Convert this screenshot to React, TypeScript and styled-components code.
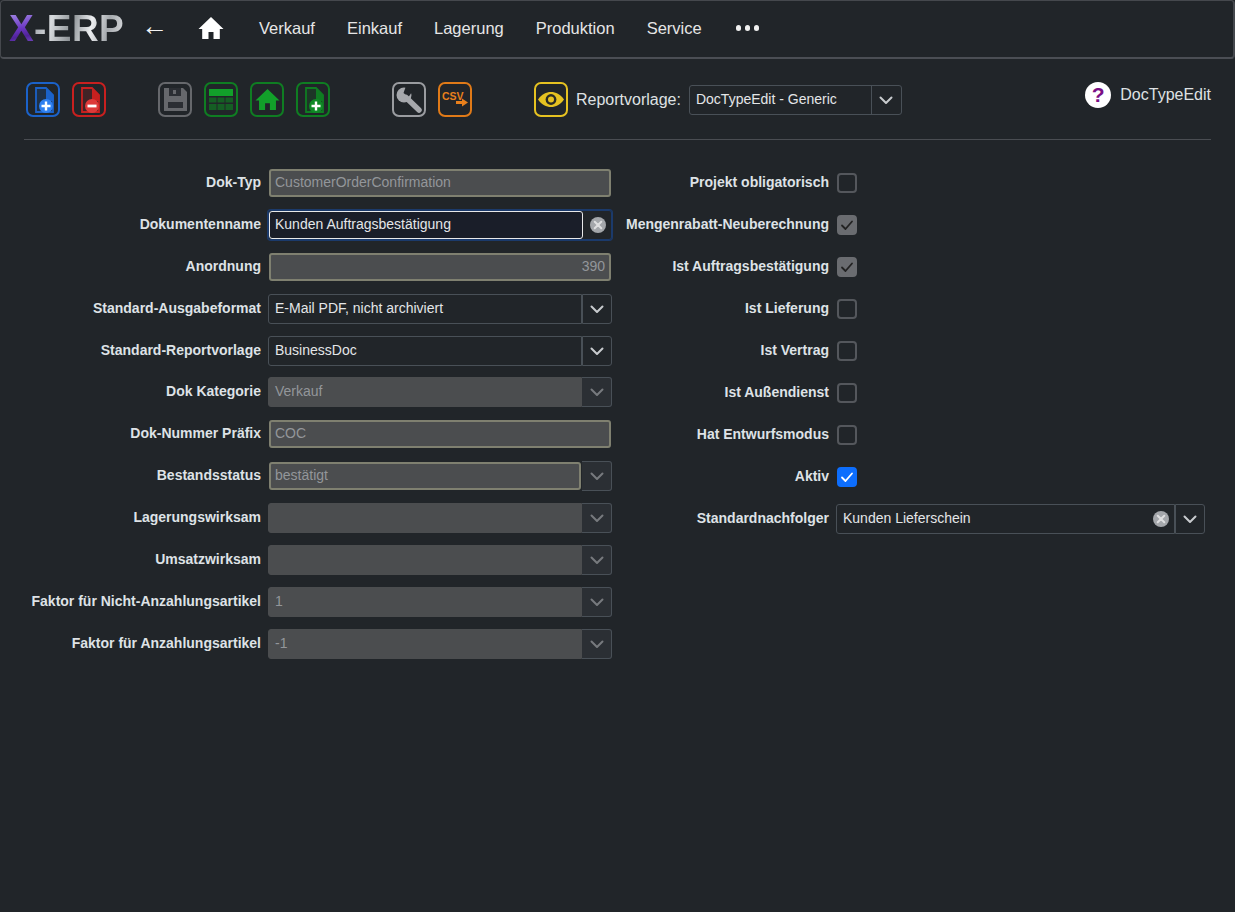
import * as React from 'react';
import styled, { createGlobalStyle } from 'styled-components';

const GlobalStyle = createGlobalStyle`
    html, body {
        margin: 0;
        padding: 0;
        height: 100%;
        background: #212529;
    }
    body {
        font-family: "Liberation Sans", Arial, sans-serif;
        font-size: 14px;
        color: #dee2e6;
    }
`;

const Page = styled.div`
    width: 1235px;
    height: 912px;
    overflow: hidden;
    background: #212529;
`;

const Header = styled.header`
    box-sizing: border-box;
    height: 59px;
    display: flex;
    align-items: center;
    padding: 0 0 2px 8px;
    border: 1px solid #45484d;
    border-bottom: 2px solid #4b4e54;
    border-radius: 4px;
    border-right-width: 2px;
`;

const Logo = styled.div`
    width: 117px;
    display: flex;
    font-size: 37px;
    font-weight: bold;
    letter-spacing: 0.4px;
    line-height: 1;
    white-space: nowrap;
`;

const LogoX = styled.span`
    background: linear-gradient(170deg, #9a7ce0 15%, #6a35c0 50%, #4f2398 70%, #8a5fd8 100%);
    -webkit-background-clip: text;
    background-clip: text;
    color: transparent;
`;

const LogoRest = styled.span`
    background: linear-gradient(100deg, #9aa0a6 0%, #d8dbde 20%, #8d9296 42%, #eceef0 62%, #a4a8ac 80%, #e0e2e4 100%);
    -webkit-background-clip: text;
    background-clip: text;
    color: transparent;
`;

const BackArrow = styled.span`
    width: 72px;
    padding: 0 0 4px 15px;
    box-sizing: border-box;
    font-size: 27px;
    color: #f2f2f2;
    line-height: 1;
`;

const HomeLink = styled.span`
    display: flex;
    width: 61px;
    color: #fff;
`;

const NavItem = styled.a`
    color: #e6e6e6;
    font-size: 16.5px;
    margin-right: 32px;
`;

const Dots = styled.span`
    display: flex;
    gap: 3.5px;
    margin-left: 2px;
`;

const Dot = styled.i`
    width: 5.5px;
    height: 5.5px;
    border-radius: 50%;
    background: #f0f0f0;
`;

const Main = styled.main`
    padding: 0 24px;
`;

const Toolbar = styled.div`
    height: 81px;
    display: flex;
    align-items: flex-start;
    padding: 23px 0 0 2px;
    box-sizing: border-box;
    border-bottom: 1px solid #4a4d52;
`;

const ToolButton = styled.button<{ $color: string; $gap?: number }>`
    box-sizing: border-box;
    width: 34px;
    height: 35px;
    padding: 0;
    display: flex;
    align-items: center;
    justify-content: center;
    background: transparent;
    border: 2px solid ${p => p.$color};
    border-radius: 7px;
    color: ${p => p.$color};
    margin-right: ${p => p.$gap ?? 12}px;
`;

const ReportLabel = styled.span`
    font-size: 16px;
    color: #dfe1e3;
    margin: 9px 9px 0 -4px;
`;

const HelpBlock = styled.div`
    margin-left: auto;
    display: flex;
    align-items: center;
    gap: 9px;
    font-size: 16px;
    color: #dfe1e3;
`;

const HelpCircle = styled.span`
    width: 26px;
    height: 26px;
    border-radius: 50%;
    background: #fff;
    color: #7a0f85;
    font-size: 21px;
    font-weight: bold;
    display: flex;
    align-items: center;
    justify-content: center;
`;

const Form = styled.div`
    display: flex;
    padding-top: 28px;
`;

const Column = styled.div<{ $width: number; $labelWidth: number; $pitch: number }>`
    width: ${p => p.$width}px;
    display: grid;
    grid-template-columns: ${p => p.$labelWidth}px 1fr;
    grid-auto-rows: ${p => p.$pitch}px;
    column-gap: 7px;
    align-items: start;
`;

const Label = styled.label`
    font-weight: bold;
    font-size: 14px;
    line-height: 28px;
    text-align: right;
    color: #dee2e6;
    white-space: nowrap;
`;

type FieldKind = 'open' | 'soft' | 'hard' | 'focus';

const fieldBg: Record<FieldKind, string> = {
    open: '#212529',
    soft: '#4b4d4f',
    hard: '#4b4d4f',
    focus: '#1a1e29',
};

const fieldBorder: Record<FieldKind, string> = {
    open: '1px solid #495057',
    soft: '1px solid #4b4d4f',
    hard: '2px solid #7f8070',
    focus: '1px solid #e8e9ea',
};

const Field = styled.div<{ $kind: FieldKind; $right?: boolean; $joined?: boolean }>`
    box-sizing: border-box;
    flex: 1;
    min-width: 0;
    height: ${p => (p.$kind === 'hard' || p.$kind === 'focus' ? 28 : 30)}px;
    margin: ${p => (p.$kind === 'hard' || p.$kind === 'focus' ? 1 : 0)}px;
    margin-right: ${p => (p.$kind === 'open' || p.$kind === 'soft' ? 0 : 1)}px;
    padding: 0 ${p => (p.$kind === 'hard' ? 4 : p.$kind === 'focus' ? 5 : 6)}px;
    line-height: ${p => (p.$kind === 'hard' ? 22 : p.$kind === 'focus' ? 24 : 27)}px;
    font-size: 14px;
    white-space: nowrap;
    text-align: ${p => (p.$right ? 'right' : 'left')};
    border-radius: ${p => (p.$joined ? '3px 0 0 3px' : '3px')};
    background: ${p => fieldBg[p.$kind]};
    color: ${p => (p.$kind === 'hard' || p.$kind === 'soft' ? '#93969a' : '#e4e6e8')};
    border: ${p => fieldBorder[p.$kind]};
`;

const Group = styled.div<{ $focus?: boolean }>`
    display: flex;
    height: 30px;
    ${p => (p.$focus ? 'box-shadow: inset 0 0 0 1px #1b3a6b, 0 0 0 1px #1b3a6b; border-radius: 3px;' : '')}
`;

const Addon = styled.span<{ $disabled?: boolean; $plain?: boolean }>`
    box-sizing: border-box;
    width: ${p => (p.$plain ? 28 : 30)}px;
    height: 30px;
    flex: none;
    display: flex;
    align-items: center;
    justify-content: center;
    color: ${p => (p.$disabled ? '#777a7e' : '#c8cbce')};
    border: ${p => (p.$plain ? 'none' : '1px solid #495057')};
    border-left: ${p => (p.$disabled || p.$plain ? 'none' : '1px solid #495057')};
    border-radius: 0 3px 3px 0;
    background: ${p => (p.$disabled ? '#2b2f34' : 'transparent')};
`;

const ClearIcon = styled.span`
    position: absolute;
    right: 35px;
    top: 6px;
    display: flex;
`;

const SelectWrap = styled.div`
    position: relative;
    display: flex;
    height: 30px;
`;

const TemplateSelect = styled.div`
    box-sizing: border-box;
    width: 213px;
    height: 30px;
    margin: 3px 0 0 -1px;
    display: flex;
    border: 1px solid #495057;
    border-radius: 3px;
`;

const TemplateText = styled.span`
    flex: 1;
    padding-left: 6px;
    line-height: 27px;
    font-size: 14px;
    color: #e4e6e8;
`;

const TemplateCaret = styled.span`
    width: 29px;
    display: flex;
    align-items: center;
    justify-content: center;
    border-left: 1px solid #495057;
    color: #c8cbce;
`;

const Check = styled.span<{ $state: 'off' | 'muted' | 'on' }>`
    box-sizing: border-box;
    width: 20px;
    height: 20px;
    margin: 5px 0 0 1px;
    display: flex;
    align-items: center;
    justify-content: center;
    border-radius: 4px;
    border: 2px solid ${p => (p.$state === 'off' ? '#54575c' : p.$state === 'on' ? '#0d6efd' : '#6a6c70')};
    background: ${p => (p.$state === 'off' ? 'transparent' : p.$state === 'on' ? '#0d6efd' : '#6a6c70')};
    color: ${p => (p.$state === 'on' ? '#fff' : '#222')};
`;

const Caret = () => (
    <svg width="16" height="16" viewBox="0 0 16 16" fill="none" stroke="currentColor" strokeWidth="2" strokeLinecap="round" strokeLinejoin="round">
        <path d="M2.5 5.5 8 11l5.5-5.5" />
    </svg>
);

const ClearGlyph = () => (
    <svg width="18" height="18" viewBox="0 0 18 18">
        <circle cx="9" cy="9" r="8" fill="#a4a7ab" />
        <path d="M5.7 5.7l6.6 6.6M12.3 5.7l-6.6 6.6" stroke="#dedfe0" strokeWidth="2" strokeLinecap="round" />
    </svg>
);

const CheckGlyph = () => (
    <svg width="14" height="14" viewBox="0 0 14 14" fill="none" stroke="currentColor" strokeWidth="1.8" strokeLinecap="round" strokeLinejoin="round">
        <path d="M2 7.5 5.5 11 12 3.5" />
    </svg>
);

const HomeGlyph = ({ size }: { size: number }) => (
    <svg width={size} height={size} viewBox="0 0 26 24" fill="currentColor">
        <path d="M13 1 0.5 13h3.7v10h6.3v-7h5v7h6.3v-10h3.7z" />
    </svg>
);

const DocGlyph = ({ badge, sign }: { badge: string; sign: 'plus' | 'minus' }) => (
    <svg width="30" height="31" viewBox="0 0 30 31">
        <path d="M8 4h10l7 7v17H8z" fill="currentColor" fillOpacity="0.2" stroke="currentColor" strokeWidth="1.8" />
        <path d="M18 3.5l7.5 7.5v6H18z" fill="currentColor" />
        <circle cx="18" cy="22" r="7" fill={badge} />
        {sign === 'plus' && <path d="M18 17.5v9M13.5 22h9" stroke="#fff" strokeWidth="2.4" />}
        {sign === 'minus' && <path d="M13.5 22h9" stroke="#fff" strokeWidth="2.8" />}
    </svg>
);

const SaveGlyph = () => (
    <svg width="30" height="31" viewBox="0 0 30 31">
        <path d="M4 4h19l4 4v19H4z" fill="currentColor" />
        <path d="M9 4h12v8H9z" fill="#2b2e33" />
        <path d="M13 6h3v4h-3z" fill="currentColor" />
        <path d="M8 18h15v6H8z" fill="#2b2e33" />
    </svg>
);

const TableGlyph = () => (
    <svg width="30" height="31" viewBox="0 0 30 31" fill="currentColor">
        <path d="M3 5h24v7H3z" fill="#12a02a" />
        <path d="M3 13.5h7.5v5H3zM11.5 13.5h7v5h-7zM19.5 13.5H27v5h-7.5zM3 20h7.5v6H3zM11.5 20h7v6h-7zM19.5 20H27v6h-7.5z" opacity="0.65" />
    </svg>
);

const WrenchGlyph = () => (
    <svg width="30" height="31" viewBox="0 0 30 31">
        <circle cx="10" cy="11" r="7.5" fill="#a6a8ac" />
        <path d="M9.5 9 12 2h10l-7.5 11z" fill="#212529" />
        <path d="M12 13.5 25 26" stroke="#a6a8ac" strokeWidth="5.5" strokeLinecap="round" />
    </svg>
);

const CsvLabel = styled.span`
    position: absolute;
    left: 2px;
    top: 4px;
    font-size: 10.5px;
    font-weight: bold;
    line-height: 16px;
    color: #e8801c;
`;

const CsvBox = styled.span`
    position: relative;
    display: block;
    width: 30px;
    height: 31px;
`;

const CsvArrow = () => (
    <svg width="30" height="31" viewBox="0 0 30 31">
        <path d="M16 17h6v-2.5l6 4-6 4V20h-6z" fill="#e8801c" />
    </svg>
);

const EyeGlyph = () => (
    <svg width="30" height="31" viewBox="0 0 30 31">
        <path d="M2 15.5C6 10 10 8 15 8s9 2 13 7.5C24 21 20 23 15 23s-9-2-13-7.5z" fill="currentColor" />
        <circle cx="15" cy="15.5" r="5.4" fill="#2a2b24" />
        <circle cx="15" cy="15.5" r="3" fill="currentColor" />
    </svg>
);

const GreenHome = styled.span`
    display: flex;
    color: #12a02a;
`;

const leftFields: { label: string; select?: boolean; value: string; kind: FieldKind; right?: boolean }[] = [
    { label: 'Dok-Typ', value: 'CustomerOrderConfirmation', kind: 'hard' },
    { label: 'Dokumentenname', value: 'Kunden Auftragsbestätigung', kind: 'focus' },
    { label: 'Anordnung', value: '390', kind: 'hard', right: true },
    { label: 'Standard-Ausgabeformat', select: true, value: 'E-Mail PDF, nicht archiviert', kind: 'open' },
    { label: 'Standard-Reportvorlage', select: true, value: 'BusinessDoc', kind: 'open' },
    { label: 'Dok Kategorie', select: true, value: 'Verkauf', kind: 'soft' },
    { label: 'Dok-Nummer Präfix', value: 'COC', kind: 'hard' },
    { label: 'Bestandsstatus', select: true, value: 'bestätigt', kind: 'hard' },
    { label: 'Lagerungswirksam', select: true, value: '', kind: 'soft' },
    { label: 'Umsatzwirksam', select: true, value: '', kind: 'soft' },
    { label: 'Faktor für Nicht-Anzahlungsartikel', select: true, value: '1', kind: 'soft' },
    { label: 'Faktor für Anzahlungsartikel', select: true, value: '-1', kind: 'soft' },
];

const checks: { label: string; state: 'off' | 'muted' | 'on' }[] = [
    { label: 'Projekt obligatorisch', state: 'off' },
    { label: 'Mengenrabatt-Neuberechnung', state: 'muted' },
    { label: 'Ist Auftragsbestätigung', state: 'muted' },
    { label: 'Ist Lieferung', state: 'off' },
    { label: 'Ist Vertrag', state: 'off' },
    { label: 'Ist Außendienst', state: 'off' },
    { label: 'Hat Entwurfsmodus', state: 'off' },
    { label: 'Aktiv', state: 'on' },
];

const navItems = ['Verkauf', 'Einkauf', 'Lagerung', 'Produktion', 'Service'];

export default function App() {
    return (
        <Page>
            <GlobalStyle />
            <Header>
                <Logo>
                    <LogoX>X</LogoX>
                    <LogoRest>-ERP</LogoRest>
                </Logo>
                <BackArrow>←</BackArrow>
                <HomeLink><HomeGlyph size={26} /></HomeLink>
                {navItems.map(item => <NavItem key={item}>{item}</NavItem>)}
                <Dots><Dot /><Dot /><Dot /></Dots>
            </Header>
            <Main>
                <Toolbar>
                    <ToolButton $color="#1b62c9"><DocGlyph badge="#2f80f0" sign="plus" /></ToolButton>
                    <ToolButton $color="#c8201f" $gap={52}><DocGlyph badge="#dd3a3a" sign="minus" /></ToolButton>
                    <ToolButton $color="#66686c"><SaveGlyph /></ToolButton>
                    <ToolButton $color="#0f7d22"><TableGlyph /></ToolButton>
                    <ToolButton $color="#0f7d22"><GreenHome><HomeGlyph size={25} /></GreenHome></ToolButton>
                    <ToolButton $color="#0f7d22" $gap={62}><DocGlyph badge="#0f8a26" sign="plus" /></ToolButton>
                    <ToolButton $color="#9a9ca0"><WrenchGlyph /></ToolButton>
                    <ToolButton $color="#e07a18" $gap={62}>
                        <CsvBox>
                            <CsvArrow />
                            <CsvLabel>CSV</CsvLabel>
                        </CsvBox>
                    </ToolButton>
                    <ToolButton $color="#e6c221"><EyeGlyph /></ToolButton>
                    <ReportLabel>Reportvorlage:</ReportLabel>
                    <TemplateSelect>
                        <TemplateText>DocTypeEdit - Generic</TemplateText>
                        <TemplateCaret><Caret /></TemplateCaret>
                    </TemplateSelect>
                    <HelpBlock>
                        <HelpCircle>?</HelpCircle>
                        DocTypeEdit
                    </HelpBlock>
                </Toolbar>
                <Form>
                    <Column $width={588} $labelWidth={237} $pitch={41.9}>
                        {leftFields.map(f => (
                            <React.Fragment key={f.label}>
                                <Label>{f.label}</Label>
                                <Group $focus={f.kind === 'focus'}>
                                    <Field $kind={f.kind} $right={f.right} $joined={f.select && f.kind !== 'hard'}>
                                        {f.value}
                                    </Field>
                                    {f.kind === 'focus' && <Addon $plain><ClearGlyph /></Addon>}
                                    {f.select && <Addon $disabled={f.kind !== 'open'}><Caret /></Addon>}
                                </Group>
                            </React.Fragment>
                        ))}
                    </Column>
                    <Column $width={593} $labelWidth={217} $pitch={42}>
                        {checks.map(c => (
                            <React.Fragment key={c.label}>
                                <Label>{c.label}</Label>
                                <div>
                                    <Check $state={c.state}>{c.state !== 'off' && <CheckGlyph />}</Check>
                                </div>
                            </React.Fragment>
                        ))}
                        <Label>Standardnachfolger</Label>
                        <SelectWrap>
                            <Field $kind="open" $joined>Kunden Lieferschein</Field>
                            <ClearIcon><ClearGlyph /></ClearIcon>
                            <Addon><Caret /></Addon>
                        </SelectWrap>
                    </Column>
                </Form>
            </Main>
        </Page>
    );
}
